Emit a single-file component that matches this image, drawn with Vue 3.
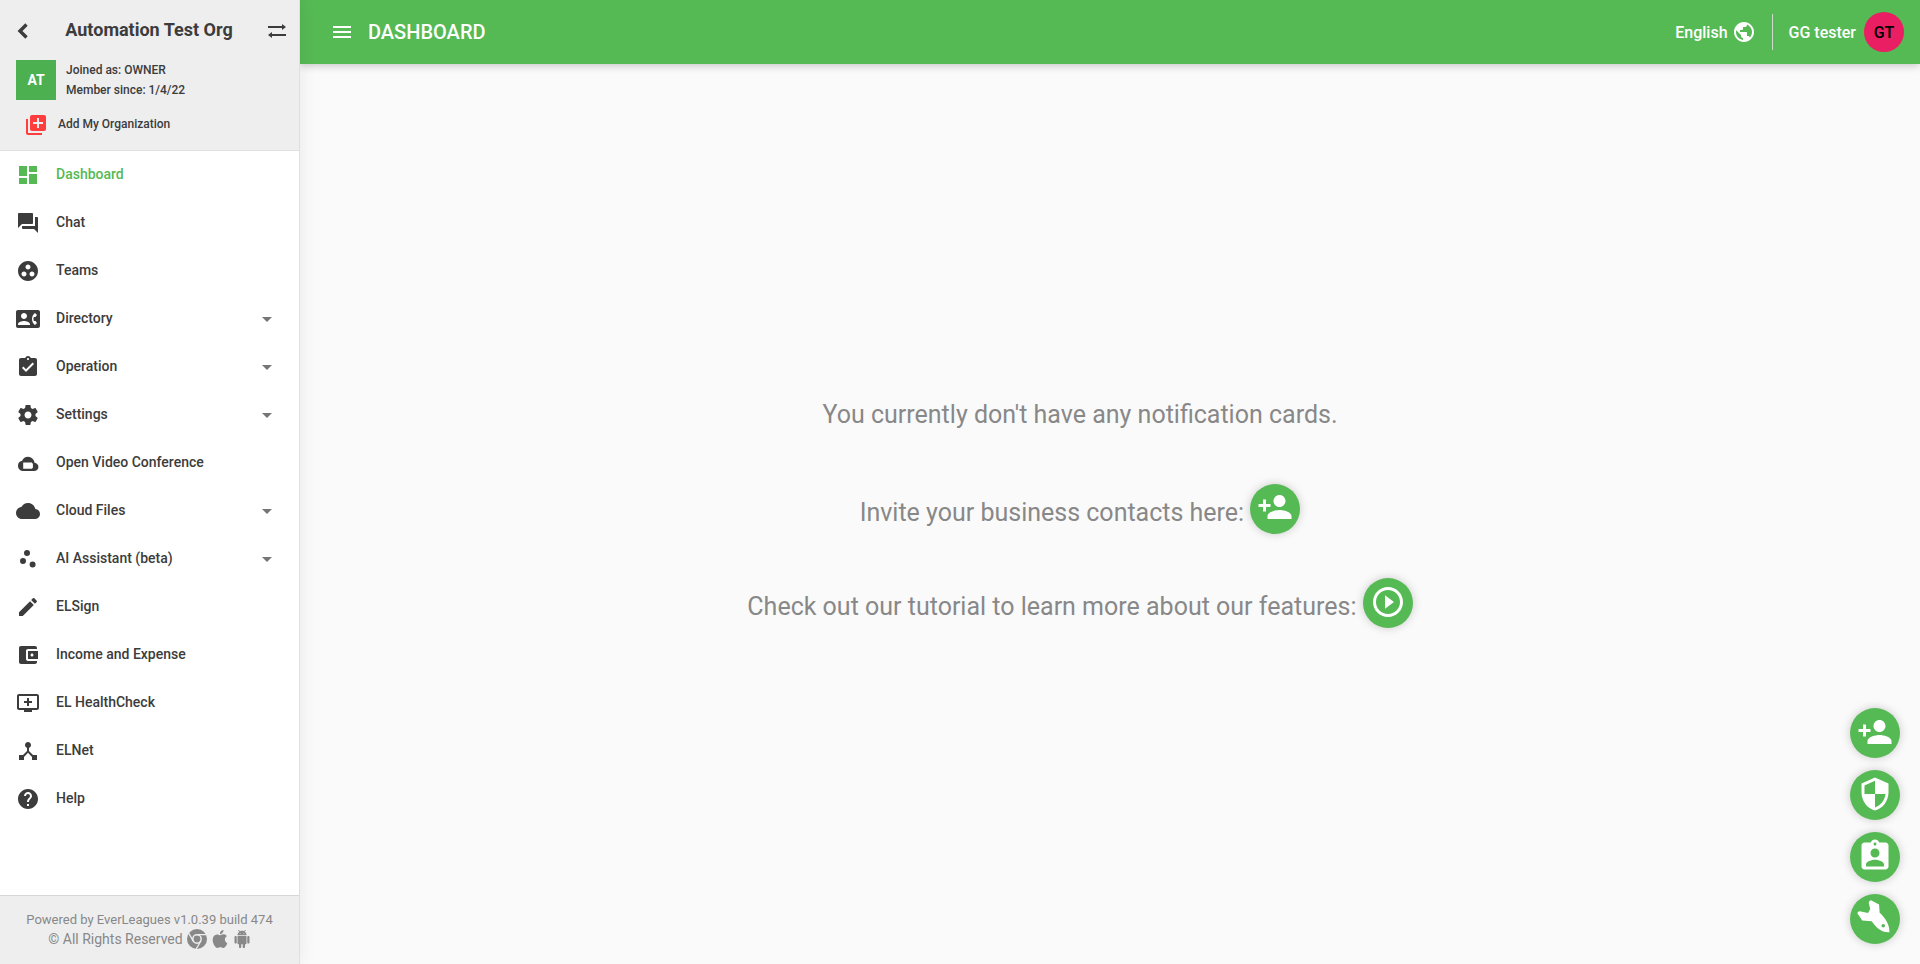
<script setup>
const icons = {
  dashboard: 'M3 13h8V3H3v10zm0 8h8v-6H3v6zm10 0h8V11h-8v10zm0-18v6h8V3h-8z',
  chat: 'M21 6h-2v9H6v2c0 .55.45 1 1 1h11l4 4V7c0-.55-.45-1-1-1zm-4 6V3c0-.55-.45-1-1-1H3c-.55 0-1 .45-1 1v14l4-4h10c.55 0 1-.45 1-1z',
  teams: 'M12 2C6.48 2 2 6.48 2 12s4.480 10 10 10 10-4.480 10-10S17.520 2 12 2zM8 17.500c-1.380 0-2.500-1.120-2.500-2.500s1.120-2.500 2.500-2.500 2.500 1.120 2.500 2.500-1.120 2.500-2.500 2.500zM9.500 8c0-1.380 1.120-2.500 2.500-2.500s2.500 1.120 2.500 2.500-1.120 2.500-2.500 2.500S9.500 9.380 9.500 8zm6.500 9.500c-1.380 0-2.500-1.120-2.500-2.500s1.120-2.500 2.500-2.500 2.500 1.120 2.500 2.500-1.120 2.500-2.500 2.500z',
  directory: 'M22 3H2C.9 3 0 3.900 0 5v14c0 1.100.9 2 2 2h20c1.100 0 1.990-.9 1.990-2L24 5c0-1.100-.9-2-2-2zM8 6c1.660 0 3 1.340 3 3s-1.340 3-3 3-3-1.340-3-3 1.340-3 3-3zm6 12H2v-1c0-2 4-3.100 6-3.100s6 1.100 6 3.100v1zm3.850-4h1.640L21 16l-1.990 1.990c-1.310-.98-2.280-2.380-2.730-3.990-.18-.64-.28-1.310-.28-2s.1-1.360.28-2c.45-1.620 1.420-3.010 2.730-3.990L21 8l-1.510 2h-1.640c-.22.630-.35 1.300-.35 2s.13 1.370.35 2z',
  operation: 'M19 3h-4.180C14.400 1.840 13.300 1 12 1c-1.300 0-2.400.84-2.820 2H5c-1.100 0-2 .9-2 2v14c0 1.100.9 2 2 2h14c1.100 0 2-.9 2-2V5c0-1.100-.9-2-2-2zm-7 0c.55 0 1 .45 1 1s-.45 1-1 1-1-.45-1-1 .45-1 1-1zm-2 14l-4-4 1.410-1.410L10 14.170l6.590-6.590L18 9l-8 8z',
  settings: 'M19.430 12.980c.04-.32.07-.64.07-.98s-.03-.66-.07-.98l2.110-1.650c.19-.15.24-.42.12-.64l-2-3.460c-.12-.22-.39-.3-.61-.22l-2.490 1c-.52-.4-1.080-.73-1.690-.98l-.38-2.650C14.460 2.180 14.250 2 14 2h-4c-.25 0-.46.18-.49.42l-.38 2.650c-.61.25-1.170.59-1.690.98l-2.490-1c-.23-.09-.49 0-.61.22l-2 3.460c-.13.22-.07.49.12.64l2.110 1.650c-.04.32-.07.65-.07.98s.03.66.07.98l-2.110 1.650c-.19.15-.24.42-.12.64l2 3.460c.12.22.39.3.61.22l2.490-1c.52.4 1.080.73 1.690.98l.38 2.650c.03.24.24.42.49.42h4c.25 0 .46-.18.49-.42l.38-2.650c.61-.25 1.170-.59 1.690-.98l2.490 1c.23.09.49 0 .61-.22l2-3.460c.12-.22.07-.49-.12-.64l-2.110-1.650zM12 15.500c-1.930 0-3.500-1.570-3.500-3.500s1.570-3.500 3.500-3.500 3.500 1.570 3.500 3.500-1.570 3.500-3.500 3.500z',
  video: 'M18.600 11.700A6.800 6.800 0 0 0 12 5.800 6.800 6.800 0 0 0 6.100 9.800 5.100 5.100 0 0 0 2 15C2 17.800 4.300 20 7 20h11a4.150 4.150 0 0 0 .6-8.300zM7.200 11.400H16v1.300l.9-.7v5.400l-.9-.7v1H7.200z',
  cloud: 'M19.350 10.040C18.670 6.590 15.640 4 12 4 9.110 4 6.600 5.640 5.350 8.040 2.340 8.360 0 10.910 0 14c0 3.310 2.690 6 6 6h13c2.760 0 5-2.240 5-5 0-2.640-2.050-4.780-4.650-4.960z',
  scatter: 'M7 11a3 3 0 1 0 0 6 3 3 0 0 0 0-6zM11 3a3 3 0 1 0 0 6 3 3 0 0 0 0-6zM16.600 14.600a3 3 0 1 0 0 6 3 3 0 0 0 0-6z',
  edit: 'M3 17.250V21h3.750L17.810 9.940l-3.750-3.750L3 17.250zM20.710 7.040c.39-.39.39-1.020 0-1.410l-2.340-2.340c-.39-.39-1.020-.39-1.410 0l-1.830 1.830 3.750 3.750 1.830-1.830z',
  wallet: 'M21 18v1c0 1.100-.9 2-2 2H5c-1.110 0-2-.9-2-2V5c0-1.100.89-2 2-2h14c1.100 0 2 .9 2 2v1h-9c-1.110 0-2 .9-2 2v8c0 1.100.89 2 2 2h9zm-9-2h10V8H12v8zm4-2.500c-.83 0-1.500-.67-1.500-1.500s.67-1.500 1.500-1.500 1.500.67 1.500 1.500-.67 1.500-1.500 1.500z',
  health: 'M21 3H3c-1.110 0-2 .89-2 2v12c0 1.100.89 2 2 2h5v2h8v-2h5c1.100 0 1.990-.9 1.990-2L23 5c0-1.110-.9-2-2-2zm0 14H3V5h18v12zm-5-7v2h-3v3h-2v-3H8v-2h3V7h2v3h3z',
  net: 'M17 16l-4-4V8.820C14.160 8.400 15 7.300 15 6c0-1.660-1.340-3-3-3S9 4.340 9 6c0 1.300.84 2.400 2 2.820V12l-4 4H3v5h5v-3.050l4-4.200 4 4.200V21h5v-5h-4z',
  help: 'M12 2C6.480 2 2 6.480 2 12s4.480 10 10 10 10-4.480 10-10S17.520 2 12 2zm1 17h-2v-2h2v2zm2.070-7.750l-.9.920C13.450 12.900 13 13.500 13 15h-2v-.5c0-1.100.45-2.100 1.170-2.830l1.240-1.260c.37-.36.59-.86.59-1.410 0-1.100-.9-2-2-2s-2 .9-2 2H8c0-2.210 1.790-4 4-4s4 1.790 4 4c0 .88-.36 1.680-.93 2.250z',
  personAdd: 'M15 12c2.210 0 4-1.790 4-4s-1.790-4-4-4-4 1.790-4 4 1.790 4 4 4zm-9-2V7H4v3H1v2h3v3h2v-3h3v-2H6zm9 4c-2.670 0-8 1.340-8 4v2h16v-2c0-2.660-5.330-4-8-4z',
  play: 'M10 16.500l6-4.500-6-4.500v9zM12 2C6.480 2 2 6.480 2 12s4.480 10 10 10 10-4.480 10-10S17.520 2 12 2zm0 18c-4.410 0-8-3.590-8-8s3.590-8 8-8 8 3.590 8 8-3.590 8-8 8z',
  shield: 'M12 1L3 5v6c0 5.550 3.840 10.740 9 12 5.160-1.260 9-6.450 9-12V5l-9-4zm0 10.990h7c-.53 4.120-3.280 7.790-7 8.940V12H5V6.300l7-3.110v8.800z',
  badge: 'M19 3h-4.180C14.400 1.840 13.300 1 12 1c-1.300 0-2.400.84-2.820 2H5c-1.100 0-2 .9-2 2v14c0 1.100.9 2 2 2h14c1.100 0 2-.9 2-2V5c0-1.100-.9-2-2-2zm-7 0c.55 0 1 .45 1 1s-.45 1-1 1-1-.45-1-1 .45-1 1-1zm0 4c1.660 0 3 1.340 3 3s-1.340 3-3 3-3-1.340-3-3 1.340-3 3-3zm6 12H6v-1.400c0-2 4-3.100 6-3.100s6 1.100 6 3.100V19z',
  rocket: 'M9.300.1 14.700 3 15.100 8.500C18.600 11.600 22 16.500 21.600 21.500 18.800 21.800 16.800 20.900 14.800 19.500 12.900 18.200 11.500 16.600 9.800 14.200L3.500 13.700.2 8.800Q.5 7.500 1.800 7.500L7.400 8.700 8.800 6 7.800 1.800Q8 .4 9.300.1zM17.500 16a1.200 1.200 0 1 0 0 2.400 1.200 1.200 0 0 0 0-2.400z',
  globe: 'M12 2C6.480 2 2 6.480 2 12s4.480 10 10 10 10-4.480 10-10S17.520 2 12 2zm-1 17.930c-3.950-.49-7-3.850-7-7.930 0-.62.08-1.210.21-1.790L9 15v1c0 1.100.9 2 2 2v1.930zm6.900-2.540c-.26-.81-1-1.390-1.900-1.390h-1v-3c0-.55-.45-1-1-1H8v-2h2c.55 0 1-.45 1-1V7h2c1.100 0 2-.9 2-2v-.41c2.930 1.190 5 4.060 5 7.410 0 2.080-.8 3.970-2.100 5.390z',
  queue: 'M4 6H2v14c0 1.100.9 2 2 2h14v-2H4V6zm16-4H8c-1.100 0-2 .9-2 2v12c0 1.100.9 2 2 2h12c1.100 0 2-.9 2-2V4c0-1.100-.9-2-2-2zm-1 9h-4v4h-2v-4H9V9h4V5h2v4h4v2z',
  apple: 'M18.710 19.500c-.83 1.240-1.710 2.450-3.050 2.470-1.340.03-1.770-.79-3.290-.79-1.530 0-2 .77-3.270.82-1.310.05-2.300-1.320-3.140-2.530C4.250 17 2.940 12.450 4.700 9.390c.87-1.520 2.430-2.480 4.120-2.510 1.280-.02 2.500.87 3.290.87.78 0 2.260-1.070 3.810-.91.65.03 2.470.26 3.640 1.980-.09.06-2.170 1.280-2.150 3.810.03 3.020 2.650 4.030 2.680 4.040-.03.07-.42 1.440-1.380 2.830M13 3.500c.73-.83 1.940-1.460 2.940-1.500.13 1.170-.34 2.350-1.040 3.190-.69.85-1.830 1.510-2.950 1.420-.15-1.150.41-2.350 1.050-3.110z',
  android: 'M6 18c0 .55.45 1 1 1h1v3.500c0 .83.67 1.500 1.500 1.500s1.500-.67 1.500-1.500V19h2v3.500c0 .83.67 1.500 1.500 1.500s1.500-.67 1.500-1.500V19h1c.55 0 1-.45 1-1V8H6v10zM3.500 8C2.670 8 2 8.670 2 9.500v7c0 .83.67 1.500 1.500 1.500S5 17.330 5 16.500v-7C5 8.670 4.330 8 3.500 8zm17 0c-.83 0-1.500.67-1.500 1.500v7c0 .83.67 1.500 1.500 1.500s1.500-.67 1.500-1.500v-7c0-.83-.67-1.500-1.500-1.500zm-4.970-5.840l1.300-1.300c.2-.2.200-.51 0-.71-.2-.2-.51-.2-.71 0l-1.480 1.480C13.850 1.230 12.950 1 12 1c-.96 0-1.860.23-2.660.63L7.850.15c-.2-.2-.51-.2-.71 0-.2.2-.2.51 0 .71l1.310 1.310C6.970 3.260 6 5.010 6 7h12c0-1.990-.97-3.750-2.470-4.840zM10 5H9V4h1v1zm5 0h-1V4h1v1z'
}

const menu = [
  { label: 'Dashboard', icon: 'dashboard', active: true },
  { label: 'Chat', icon: 'chat' },
  { label: 'Teams', icon: 'teams' },
  { label: 'Directory', icon: 'directory', expandable: true },
  { label: 'Operation', icon: 'operation', expandable: true },
  { label: 'Settings', icon: 'settings', expandable: true },
  { label: 'Open Video Conference', icon: 'video' },
  { label: 'Cloud Files', icon: 'cloud', expandable: true },
  { label: 'AI Assistant (beta)', icon: 'scatter', expandable: true },
  { label: 'ELSign', icon: 'edit' },
  { label: 'Income and Expense', icon: 'wallet' },
  { label: 'EL HealthCheck', icon: 'health' },
  { label: 'ELNet', icon: 'net' },
  { label: 'Help', icon: 'help' }
]

const actions = [
  { label: 'Invite contact', icon: 'personAdd' },
  { label: 'Security', icon: 'shield' },
  { label: 'Assignments', icon: 'badge' },
  { label: 'Quick start', icon: 'rocket' }
]
</script>

<template>
  <div class="layout">
    <aside class="sidebar">
      <header class="org">
        <div class="org-title">
          <button class="plain" type="button" aria-label="Back">
            <svg class="back" viewBox="0 0 14 18"><path d="M10.500 2.500 4 9l6.500 6.500" fill="none" stroke="currentColor" stroke-width="3.400" /></svg>
          </button>
          <h1>Automation Test Org</h1>
          <button class="plain" type="button" aria-label="Switch organization">
            <svg class="swap" viewBox="0 0 18 14"><path d="M0 2h14V0l4 3-4 3V4H0zM18 10H4V8l-4 3 4 3v-2h14z" /></svg>
          </button>
        </div>
        <div class="org-info">
          <span class="org-avatar">AT</span>
          <p>Joined as: OWNER<br />Member since: 1/4/22</p>
        </div>
        <button class="plain add-org" type="button">
          <svg class="icon" viewBox="0 0 24 24"><path :d="icons.queue" /></svg>
          <span>Add My Organization</span>
        </button>
      </header>

      <nav class="menu">
        <a v-for="item in menu" :key="item.label" href="#" class="menu-item" :class="{ active: item.active }">
          <svg class="icon" viewBox="0 0 24 24"><path fill-rule="evenodd" :d="icons[item.icon]" /></svg>
          <span class="menu-label">{{ item.label }}</span>
          <span v-if="item.expandable" class="arrow"></span>
        </a>
      </nav>

      <footer class="footer">
        <div>Powered by EverLeagues v1.0.39 build 474</div>
        <div class="rights">
          <span>© All Rights Reserved</span>
          <a href="#" aria-label="Chrome">
            <svg class="chrome" viewBox="0 0 24 24">
              <circle cx="12" cy="12" r="12" />
              <circle cx="12" cy="12" r="5" fill="none" stroke="#eee" stroke-width="1.800" />
              <path d="M12 6.800h11M7.500 14.600 2 5M16.500 14.600 11 24" fill="none" stroke="#eee" stroke-width="1.500" />
            </svg>
          </a>
          <a href="#" aria-label="Apple"><svg class="store" viewBox="3 2 18 20"><path :d="icons.apple" /></svg></a>
          <a href="#" aria-label="Android"><svg class="store" viewBox="2 0 20 24"><path :d="icons.android" /></svg></a>
        </div>
      </footer>
    </aside>

    <div class="page">
      <header class="topbar">
        <button class="plain" type="button" aria-label="Toggle menu">
          <svg class="icon" viewBox="0 0 24 24"><path d="M3 18h18v-2H3v2zm0-5h18v-2H3v2zm0-7v2h18V6H3z" /></svg>
        </button>
        <h2>DASHBOARD</h2>
        <button class="plain language" type="button">
          <span>English</span>
          <svg class="icon" viewBox="0 0 24 24"><path :d="icons.globe" /></svg>
        </button>
        <button class="plain user" type="button">
          <span>GG tester</span>
          <span class="user-avatar">GT</span>
        </button>
      </header>

      <main class="content">
        <p class="notice">You currently don't have any notification cards.</p>
        <p>
          Invite your business contacts here:
          <button class="fab" type="button" aria-label="Invite contacts">
            <svg viewBox="0 0 24 24"><path :d="icons.personAdd" /></svg>
          </button>
        </p>
        <p>
          Check out our tutorial to learn more about our features:
          <button class="fab" type="button" aria-label="Play tutorial">
            <svg viewBox="0 0 24 24"><path :d="icons.play" /></svg>
          </button>
        </p>
      </main>
    </div>

    <div class="actions">
      <button v-for="action in actions" :key="action.label" class="fab" type="button" :aria-label="action.label">
        <svg viewBox="0 0 24 24"><path :d="icons[action.icon]" fill-rule="evenodd" /></svg>
      </button>
    </div>
  </div>
</template>

<style>
body {
  margin: 0;
}
</style>

<style scoped>
.layout {
  display: flex;
  min-height: 100vh;
  background: #fafafa;
  color: #3c3c3c;
  font-family: Roboto, "Liberation Sans", sans-serif;
}
.layout * {
  box-sizing: border-box;
}
svg {
  display: block;
  fill: currentColor;
}
.icon {
  width: 24px;
  height: 24px;
  flex: none;
}
.plain {
  display: flex;
  align-items: center;
  padding: 0;
  border: 0;
  background: none;
  color: inherit;
  font: inherit;
  cursor: pointer;
}
.sidebar {
  display: flex;
  flex-direction: column;
  flex: none;
  width: 300px;
  border-right: 1px solid #e0e0e0;
  background: #fff;
  z-index: 1;
  box-shadow: 0 0 16px rgba(0, 0, 0, 0.08);
}
.org {
  padding: 16px 13px 6px 16px;
  border-bottom: 1px solid #e0e0e0;
  background: #eee;
}
.org-title {
  display: flex;
  align-items: center;
  justify-content: space-between;
  height: 30px;
}
.org-title h1 {
  margin: 0;
  padding-bottom: 2px;
  font-size: 18px;
  line-height: 28px;
  font-weight: 700;
}
.back {
  width: 14px;
  height: 18px;
}
.swap {
  width: 18px;
  height: 14px;
}
.org-info {
  display: flex;
  gap: 10px;
  margin-top: 14px;
}
.org-avatar {
  display: grid;
  place-items: center;
  width: 40px;
  height: 40px;
  background: #4caf50;
  color: #fff;
  font-size: 14px;
  font-weight: 700;
}
.org-info p {
  margin: 0;
  font-size: 12px;
  line-height: 20px;
  font-weight: 500;
}
.add-org {
  gap: 10px;
  height: 38px;
  margin-top: 6px;
  padding-left: 8px;
  font-size: 12px;
  font-weight: 500;
}
.add-org span {
  padding-bottom: 2px;
}
.add-org .icon {
  color: #ff3d3d;
}
.menu {
  flex: 1;
}
.menu-item {
  display: flex;
  align-items: center;
  gap: 16px;
  height: 48px;
  padding: 0 27px 0 16px;
  color: inherit;
  font-size: 14px;
  font-weight: 500;
  text-decoration: none;
}
.menu-item.active {
  color: #55b954;
}
.menu-label {
  flex: 1;
  padding-bottom: 2px;
}
.arrow {
  border: 5px solid transparent;
  border-top-color: #757575;
  border-bottom: 0;
}
.footer {
  padding: 15px 0;
  border-top: 1px solid #d6d6d6;
  background: #eee;
  color: #888;
  font-size: 13px;
  line-height: 18px;
  text-align: center;
}
.rights {
  display: flex;
  align-items: center;
  justify-content: center;
  gap: 4px;
  height: 20px;
  font-size: 14px;
}
.rights a {
  color: inherit;
}
.chrome {
  width: 20px;
  height: 20px;
}
.store {
  width: 18px;
  height: 18px;
}
.page {
  display: flex;
  flex-direction: column;
  flex: 1;
}
.topbar {
  display: flex;
  align-items: center;
  height: 64px;
  padding: 0 16px 0 30px;
  background: #55b954;
  color: #fff;
  box-shadow: 0 2px 8px rgba(0, 0, 0, 0.2);
  font-size: 16px;
  font-weight: 500;
}
.topbar h2 {
  margin: 0 auto 0 14px;
  font-size: 20px;
  font-weight: 500;
}
.language {
  gap: 4px;
  height: 36px;
  padding-right: 16px;
  border-right: 1px solid #cfd8cf;
}
.user {
  gap: 8px;
  padding-left: 16px;
}
.user-avatar {
  display: grid;
  place-items: center;
  width: 40px;
  height: 40px;
  border-radius: 50%;
  background: #e91e63;
  color: #000;
}
.content {
  display: flex;
  flex-direction: column;
  align-items: center;
  justify-content: center;
  gap: 44px;
  flex: 1;
  padding: 0 60px 10px 0;
  color: #888;
  font-size: 25px;
  line-height: 44px;
}
.content p {
  margin: 0;
}
.content .notice {
  line-height: 50px;
}
.fab {
  display: inline-grid;
  place-items: center;
  width: 50px;
  height: 50px;
  padding: 0 0 3px;
  border: 0;
  border-radius: 50%;
  background: #55b954;
  color: #fff;
  box-shadow: 0 0 10px rgba(0, 0, 0, 0.2);
  cursor: pointer;
}
.content .fab {
  vertical-align: -5px;
}
.fab svg {
  width: 36px;
  height: 36px;
}
.actions {
  position: fixed;
  right: 20px;
  bottom: 20px;
  display: flex;
  flex-direction: column;
  gap: 12px;
}
</style>
